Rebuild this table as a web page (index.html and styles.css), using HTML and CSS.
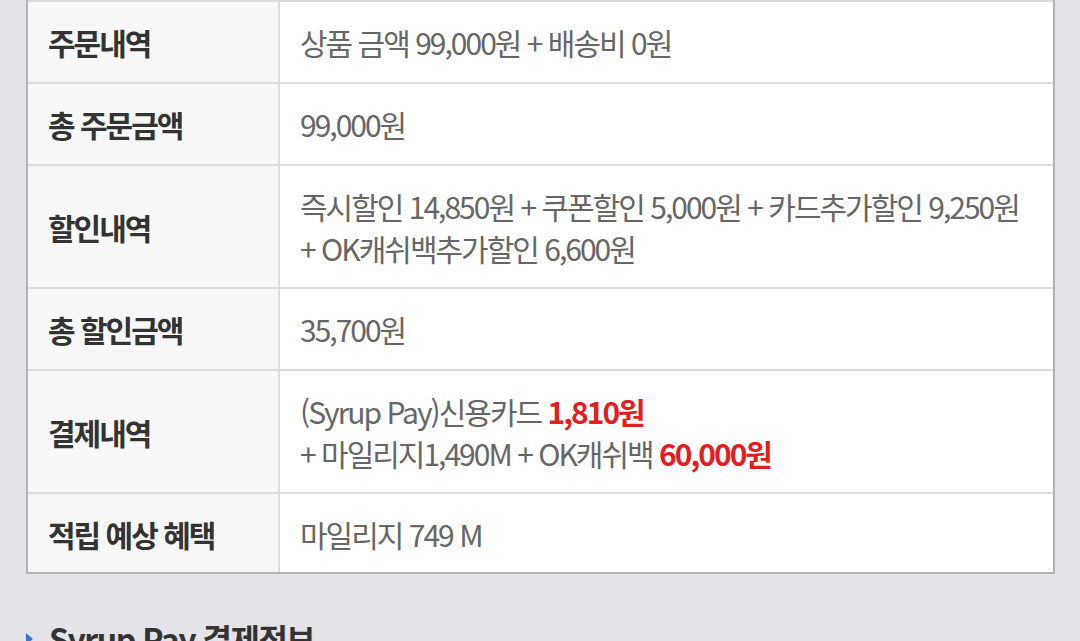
FILE: index.html
```html
<!DOCTYPE html>
<html lang="ko">
<head>
    <meta charset="UTF-8">
    <meta name="viewport" content="width=device-width, initial-scale=1.0">
    <title>결제 정보</title>
    <link rel="stylesheet" href="styles.css">
</head>
<body>
<div class="summary">
    <table class="summary-table">
        <tr>
            <th>주문내역</th>
            <td>상품 금액 99,000원 + 배송비 0원</td>
        </tr>
        <tr>
            <th>총 주문금액</th>
            <td>99,000원</td>
        </tr>
        <tr class="two-line">
            <th>할인내역</th>
            <td>즉시할인 14,850원 + 쿠폰할인 5,000원 + 카드추가할인 9,250원<br>+ OK캐쉬백추가할인 6,600원</td>
        </tr>
        <tr>
            <th>총 할인금액</th>
            <td>35,700원</td>
        </tr>
        <tr class="two-line">
            <th>결제내역</th>
            <td>(Syrup Pay)신용카드 <strong class="price">1,810원</strong><br>+ 마일리지1,490M + OK캐쉬백 <strong class="price">60,000원</strong></td>
        </tr>
        <tr>
            <th>적립 예상 혜택</th>
            <td>마일리지 749 M</td>
        </tr>
    </table>
</div>

<h2 class="section-title">Syrup Pay 결제정보</h2>
</body>
</html>
```

FILE: styles.css
```css
body {
    margin: 0;
    padding: 0 25px 0 26px;
    background: #e3e3e8;
    font-family: "Noto Sans CJK KR", "Noto Sans", sans-serif;
    color: #333;
}

.summary {
    border: 2px solid #b3b3b3;
    border-top: none;
    background: #fff;
}

.summary-table {
    width: 100%;
    border-collapse: collapse;
}

.summary-table th,
.summary-table td {
    border-top: 2px solid #dcdcdc;
    padding: 19px 20px;
    font-size: 30px;
    line-height: 42px;
    letter-spacing: -2px;
    text-align: left;
    vertical-align: middle;
}

.summary-table .two-line td {
    padding-bottom: 18px;
}

.summary-table tr:last-child th,
.summary-table tr:last-child td {
    padding-bottom: 17px;
}

.summary-table th {
    width: 210px;
    background: #f7f7f7;
    border-right: 2px solid #dcdcdc;
    font-weight: bold;
    color: #333;
}

.summary-table td {
    color: #666;
}

.price {
    color: #e41e1e;
    font-weight: bold;
}

.section-title {
    margin: 44px 0 0;
    font-size: 32px;
    line-height: 40px;
    letter-spacing: -1.5px;
    color: #333;
    padding-left: 23px;
    position: relative;
}

.section-title::before {
    content: "";
    position: absolute;
    left: 0;
    top: 15px;
    border-left: 7px solid #3a78d4;
    border-top: 6px solid transparent;
    border-bottom: 6px solid transparent;
}
```
